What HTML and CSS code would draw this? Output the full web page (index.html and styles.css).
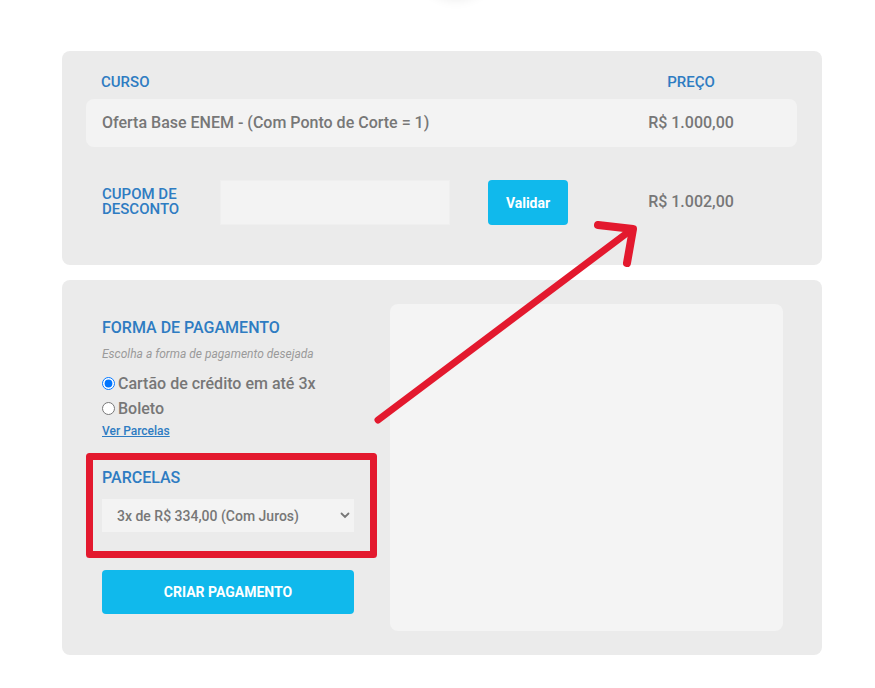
FILE: index.html
```html
<!DOCTYPE html>
<html lang="pt-BR">
<head>
  <meta charset="UTF-8">
  <meta name="viewport" content="width=device-width, initial-scale=1">
  <title>Pagamento</title>
  <link rel="stylesheet" href="styles.css">
</head>
<body>
  <div class="header">
    <div class="logo"></div>
  </div>

  <div class="page">
    <div class="card cart">
      <div class="cart-head">
        <span class="label">CURSO</span>
        <span class="label center">PREÇO</span>
      </div>
      <div class="cart-row">
        <span class="item">Oferta Base ENEM - (Com Ponto de Corte = 1)</span>
        <span class="item center">R$ 1.000,00</span>
      </div>
      <div class="coupon">
        <label class="label coupon-label" for="cupom">CUPOM DE DESCONTO</label>
        <input id="cupom" class="coupon-input" type="text">
        <button class="btn validate">Validar</button>
        <span class="item center total">R$ 1.002,00</span>
      </div>
    </div>

    <div class="card payment">
      <div class="pay-form">
        <h3 class="label title">FORMA DE PAGAMENTO</h3>
        <p class="hint">Escolha a forma de pagamento desejada</p>
        <label class="option"><input type="radio" name="forma" checked> Cartão de crédito em até 3x</label>
        <label class="option"><input type="radio" name="forma"> Boleto</label>
        <a class="link" href="#">Ver Parcelas</a>

        <h3 class="label title parcelas">PARCELAS</h3>
        <div class="select-wrap">
          <select class="select">
            <option>3x de R$ 334,00 (Com Juros)</option>
            <option>2x de R$ 501,00 (Sem Juros)</option>
            <option>1x de R$ 1.002,00</option>
          </select>
          <svg class="chevron" width="10" height="7" viewBox="0 0 10 7">
            <path d="M1.5 1.5 L5 5 L8.5 1.5" fill="none" stroke="#777" stroke-width="1.8" stroke-linecap="round"/>
          </svg>
        </div>

        <button class="btn create">CRIAR PAGAMENTO</button>
      </div>
      <div class="pay-panel"></div>
    </div>
  </div>

  <!-- marcações em vermelho sobre o print -->
  <svg class="marks" width="875" height="688" viewBox="0 0 875 688">
    <path d="M89.5 456.5 H373.5 V554.5 H89.5 Z" fill="none" stroke="#e3192e" stroke-width="7" stroke-linejoin="round"/>
    <path d="M378 420 L631 230" fill="none" stroke="#e3192e" stroke-width="7" stroke-linecap="round"/>
    <path d="M598 225 L633 229 L627 263" fill="none" stroke="#e3192e" stroke-width="8" stroke-linecap="round" stroke-linejoin="round"/>
  </svg>
</body>
</html>
```

FILE: styles.css
```css
body {
  font-family: Roboto, 'Liberation Sans', sans-serif;
  background: #fff;
  color: #777;
  margin: 0;
  position: relative;
}
.header {
  height: 51px;
  overflow: hidden;
}
.logo {
  width: 76px;
  height: 76px;
  margin: -78px 0 0 418px;
  border-radius: 50%;
  background: #fff;
  box-shadow: 0 2px 12px rgba(0,0,0,0.08);
}
.page {
  width: 760px;
  margin-left: 62px;
}
.card {
  background: #ebebeb;
  border-radius: 8px;
}
.label {
  color: #2e7cc2;
  font-size: 15px;
  font-weight: 500;
  line-height: 18px;
}
.center {
  text-align: center;
}
.item {
  font-size: 16px;
  font-weight: 500;
  color: #777;
}

/* carrinho */
.cart {
  padding: 22px 25px 40px 24px;
}
.cart-head,
.cart-row {
  display: grid;
  grid-template-columns: 1fr 180px;
  padding: 0 16px 0 15px;
}
.cart-head {
  margin-bottom: 8px;
}
.cart-row {
  height: 48px;
  align-items: center;
  background: #f3f3f3;
  border-radius: 8px;
  padding-left: 16px;
  padding-bottom: 2px;
  box-sizing: border-box;
}
.coupon {
  display: flex;
  align-items: center;
  margin-top: 33px;
  padding: 0 16px;
  height: 45px;
}
.coupon-label {
  width: 100px;
  margin-right: 18px;
  margin-bottom: 2px;
  line-height: 15px;
  font-size: 15px;
}
.coupon-input {
  width: 230px;
  height: 45px;
  box-sizing: border-box;
  border: 1px solid #efefef;
  background: #f3f3f3;
  outline: none;
}
.btn {
  border: none;
  border-radius: 4px;
  background: #10b9ec;
  color: #fff;
  font-family: inherit;
  font-weight: 700;
  cursor: pointer;
}
.validate {
  width: 80px;
  height: 45px;
  margin-left: 38px;
  font-size: 14px;
}
.total {
  width: 180px;
  margin-left: auto;
  margin-bottom: 2px;
}

/* pagamento */
.payment {
  display: flex;
  margin-top: 15px;
  padding: 24px 39px 24px 40px;
}
.pay-form {
  width: 252px;
  margin-right: 36px;
  display: flex;
  flex-direction: column;
  align-items: flex-start;
}
.pay-panel {
  flex: 1;
  height: 327px;
  background: #f4f4f4;
  border-radius: 8px;
}
.title {
  margin: 14px 0 0;
  font-size: 16px;
  line-height: 19px;
}
.hint {
  margin: 10px 0 0;
  font-size: 12px;
  line-height: 14px;
  font-style: italic;
  color: #9a9a9a;
}
.option {
  display: flex;
  align-items: center;
  height: 25px;
  font-size: 16px;
  font-weight: 500;
  color: #777;
}
.option:first-of-type {
  margin-top: 10px;
}
.option input {
  margin: 0 3px 0 0;
  width: 13px;
  height: 13px;
}
.link {
  margin-top: 3px;
  font-size: 12px;
  line-height: 15px;
  font-weight: 500;
  color: #2e7cc2;
}
.parcelas {
  margin-top: 29px;
}
.select-wrap {
  position: relative;
  width: 252px;
  margin-top: 12px;
}
.select {
  width: 100%;
  height: 33px;
  padding: 0 0 0 15px;
  border: none;
  background: #f3f3f3;
  color: #777;
  font-family: inherit;
  font-size: 14px;
  font-weight: 500;
  appearance: none;
  -webkit-appearance: none;
  outline: none;
}
.chevron {
  position: absolute;
  right: 4px;
  top: 13px;
  pointer-events: none;
}
.create {
  width: 252px;
  height: 44px;
  margin-top: 38px;
  font-size: 14px;
}

.marks {
  position: absolute;
  left: 0;
  top: 0;
  pointer-events: none;
}
```
